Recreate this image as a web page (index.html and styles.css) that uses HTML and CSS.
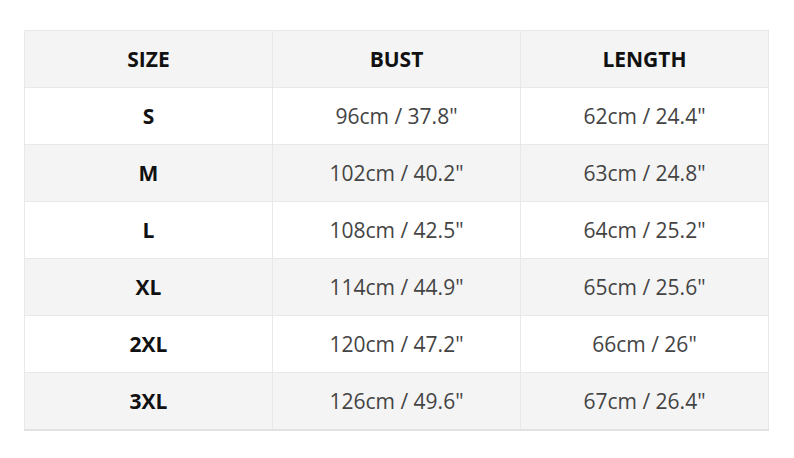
FILE: index.html
```html
<!DOCTYPE html>
<html>
<head>
<meta charset="utf-8">
<link rel="stylesheet" href="styles.css">
</head>
<body>
<table class="size-table">
  <thead>
    <tr><th>SIZE</th><th>BUST</th><th>LENGTH</th></tr>
  </thead>
  <tbody>
    <tr><td class="size">S</td><td>96cm / 37.8"</td><td>62cm / 24.4"</td></tr>
    <tr><td class="size">M</td><td>102cm / 40.2"</td><td>63cm / 24.8"</td></tr>
    <tr><td class="size">L</td><td>108cm / 42.5"</td><td>64cm / 25.2"</td></tr>
    <tr><td class="size">XL</td><td>114cm / 44.9"</td><td>65cm / 25.6"</td></tr>
    <tr><td class="size">2XL</td><td>120cm / 47.2"</td><td>66cm / 26"</td></tr>
    <tr><td class="size">3XL</td><td>126cm / 49.6"</td><td>67cm / 26.4"</td></tr>
  </tbody>
</table>
</body>
</html>
```
FILE: styles.css
```css
html, body {
  margin: 0;
  background: #fff;
}
body {
  padding: 30px 0 0 24px;
  font-family: "Open Sans", "Liberation Sans", sans-serif;
}
.size-table {
  border-collapse: collapse;
  width: 745px;
  table-layout: fixed;
  border-bottom: 2px solid #e2e2e2;
}
.size-table th,
.size-table td {
  height: 56px;
  padding: 0;
  text-align: center;
  border: 1px solid #e8e8e8;
  font-size: 21px;
  line-height: 24px;
}
.size-table th {
  font-weight: 700;
  color: #111;
  background: #f4f4f4;
}
.size-table td {
  color: #444;
  font-weight: 400;
}
.size-table td.size {
  font-weight: 700;
  color: #111;
}
.size-table tbody tr:nth-child(even) td {
  background: #f4f4f4;
}
.size-table tbody tr:nth-child(odd) td {
  background: #fff;
}
```
